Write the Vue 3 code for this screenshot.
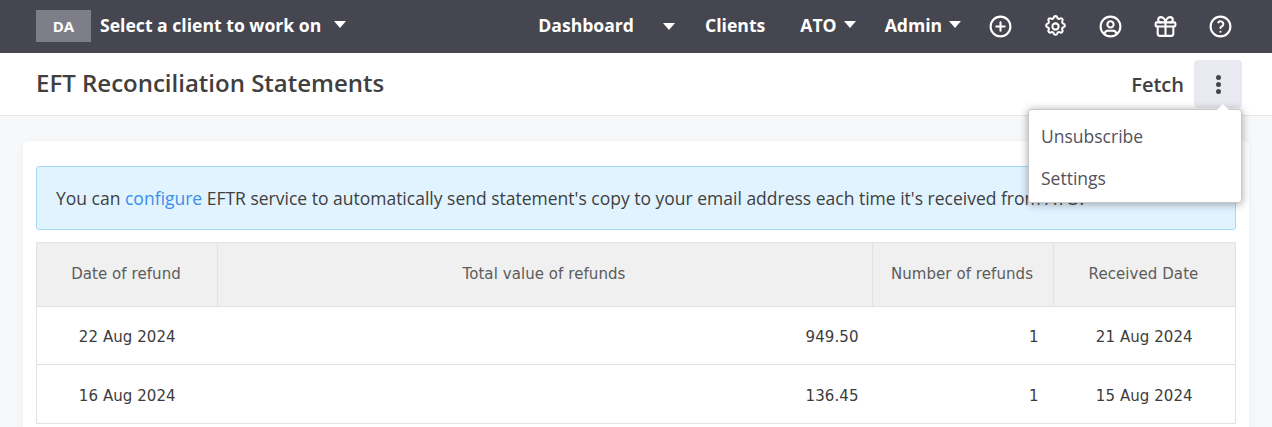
<script setup>
const rows = [
  { date: '22 Aug 2024', total: '949.50', count: 1, received: '21 Aug 2024' },
  { date: '16 Aug 2024', total: '136.45', count: 1, received: '15 Aug 2024' },
]
</script>

<template>
  <div class="page">
    <header class="topbar">
      <div class="client">
        <span class="avatar">DA</span>
        <span class="client-name">Select a client to work on</span>
        <span class="caret caret-client"></span>
      </div>
      <nav class="nav">
        <span class="nav-item nav-dash">Dashboard<span class="caret caret-dash"></span></span>
        <span class="nav-item nav-clients">Clients</span>
        <span class="nav-item nav-ato">ATO<span class="caret caret-tight"></span></span>
        <span class="nav-item nav-admin">Admin<span class="caret caret-tight"></span></span>
      </nav>
      <div class="icons">
        <svg viewBox="0 0 24 24" class="icon"><circle cx="12" cy="12" r="9.5"/><path d="M12 8v8M8 12h8"/></svg>
        <svg viewBox="0 0 24 24" class="icon"><path d="M10.3 3.3c.4-1.7 3-1.7 3.4 0a1.7 1.7 0 0 0 2.6 1.1c1.5-.9 3.2.8 2.3 2.3a1.7 1.7 0 0 0 1.1 2.6c1.7.4 1.7 3 0 3.4a1.7 1.7 0 0 0-1.1 2.6c.9 1.5-.8 3.2-2.3 2.3a1.7 1.7 0 0 0-2.6 1.1c-.4 1.7-3 1.7-3.4 0a1.7 1.7 0 0 0-2.6-1.1c-1.5.9-3.2-.8-2.3-2.3a1.7 1.7 0 0 0-1.1-2.6c-1.7-.4-1.7-3 0-3.4a1.7 1.7 0 0 0 1.1-2.6c-.9-1.5.8-3.2 2.3-2.3a1.7 1.7 0 0 0 2.6-1.1z"/><circle cx="12" cy="12" r="3"/></svg>
        <svg viewBox="0 0 24 24" class="icon"><circle cx="12" cy="12" r="9.5"/><circle cx="12" cy="10" r="3"/><path d="M6.2 18.7A4 4 0 0 1 10 16h4a4 4 0 0 1 3.8 2.7"/></svg>
        <svg viewBox="0 0 24 24" class="icon"><rect x="2.5" y="8" width="19" height="4" rx="1"/><path d="M12 8v13M19.5 12v7a2 2 0 0 1-2 2h-11a2 2 0 0 1-2-2v-7M7.5 8a2.5 2.5 0 0 1 0-5c2.500 0 4.500 3 4.500 5 0-2 2-5 4.500-5a2.500 2.500 0 0 1 0 5"/></svg>
        <svg viewBox="0 0 24 24" class="icon"><circle cx="12" cy="12" r="9.500"/><path d="M12 17v.01M12 13.500a1.500 1.500 0 0 1 1-1.500 2.600 2.600 0 1 0-3-4"/></svg>
      </div>
    </header>

    <div class="subbar">
      <h1 class="title">EFT Reconciliation Statements</h1>
      <div class="actions">
        <span class="fetch">Fetch</span>
        <span class="more"><span class="dot"></span><span class="dot"></span><span class="dot"></span></span>
        <div class="menu">
          <span class="arrow"></span>
          <div class="menu-item">Unsubscribe</div>
          <div class="menu-item">Settings</div>
        </div>
      </div>
    </div>

    <main class="content">
      <section class="card">
        <div class="alert">You can <a class="link">configure</a> EFTR service to automatically send statement's copy to your email address each time it's received from ATO.</div>
        <table class="table">
          <colgroup>
            <col class="c1" /><col /><col class="c3" /><col class="c4" />
          </colgroup>
          <thead>
            <tr>
              <th>Date of refund</th>
              <th>Total value of refunds</th>
              <th>Number of refunds</th>
              <th>Received Date</th>
            </tr>
          </thead>
          <tbody>
            <tr v-for="r in rows" :key="r.date">
              <td class="center">{{ r.date }}</td>
              <td class="right">{{ r.total }}</td>
              <td class="right count">{{ r.count }}</td>
              <td class="center">{{ r.received }}</td>
            </tr>
          </tbody>
        </table>
      </section>
    </main>
  </div>
</template>

<style>
html, body { margin: 0; overflow: hidden; }
</style>

<style scoped>
.page {
  width: 1272px;
  height: 427px;
  overflow: hidden;
  background: #f7f8fa;
  font-family: "Open Sans", sans-serif;
  color: #404040;
}
.topbar {
  height: 53px;
  background: #464650;
  color: #fff;
  display: flex;
  align-items: center;
  padding: 0 0 0 36px;
  box-sizing: border-box;
}
.client { display: flex; align-items: center; }
.avatar {
  width: 55px;
  height: 32px;
  margin-top: -1px;
  background: #7e7e88;
  display: flex;
  align-items: center;
  justify-content: center;
  font-size: 15px;
  font-weight: 700;
}
.client-name { margin-left: 9px; font-size: 17.6px; font-weight: 700; margin-top: -4px; }
.caret {
  display: inline-block;
  width: 0;
  height: 0;
  border-left: 6px solid transparent;
  border-right: 6px solid transparent;
  border-top: 7px solid #fff;
}
.caret-client { margin-left: 13px; margin-top: -5px; }
.nav { display: flex; align-items: center; margin-left: 192px; font-size: 17.6px; font-weight: 700; }
.nav-item { display: inline-flex; align-items: center; margin-top: -4px; }
.caret-dash { margin-left: 29px; margin-top: 4px; }
.caret-tight { margin-left: 7px; margin-top: -1px; }
.nav-dash { margin-right: 30px; }
.nav-clients { margin-right: 35px; }
.nav-ato { margin-right: 29px; }
.icons { display: flex; gap: 30px; margin-left: 27px; }
.icon {
  width: 25px;
  height: 25px;
  fill: none;
  stroke: #fff;
  stroke-width: 2;
  stroke-linecap: round;
  stroke-linejoin: round;
}
.subbar {
  height: 63px;
  box-sizing: border-box;
  background: #fff;
  border-bottom: 1px solid #e4e5e7;
  display: flex;
  align-items: center;
  justify-content: space-between;
  padding: 0 30px 0 36px;
}
.title { margin: 0 0 4px; font-size: 24px; font-weight: 600; color: #404040; }
.actions { display: flex; align-items: center; position: relative; }
.fetch { font-size: 20px; font-weight: 600; margin-right: 10px; }
.more {
  width: 48px;
  height: 48px;
  border-radius: 4px;
  background: #e9e9f1;
  display: flex;
  flex-direction: column;
  align-items: center;
  justify-content: center;
  gap: 2px;
}
.dot { width: 5px; height: 5px; border-radius: 50%; background: #46464f; }
.menu {
  position: absolute;
  top: 49px;
  right: 0;
  width: 214px;
  height: 94px;
  box-sizing: border-box;
  background: #fff;
  border-radius: 3px;
  border: 1px solid #c8c8c8;
  box-shadow: 0 1px 8px rgba(0, 0, 0, 0.35);
  padding-top: 5px;
  z-index: 5;
  font-size: 17.5px;
  color: #52525c;
}
.arrow {
  position: absolute;
  top: -6px;
  right: 12px;
  width: 0;
  height: 0;
  border-left: 6px solid transparent;
  border-right: 6px solid transparent;
  border-bottom: 6px solid #fff;
}
.menu-item { height: 42px; line-height: 42px; padding-left: 12px; }
.content { padding: 25px 23px 0; }
.card {
  background: #fff;
  border-radius: 6px;
  box-shadow: 0 0 8px rgba(0, 0, 0, 0.04);
  padding: 25px 13px 40px;
}
.alert {
  height: 64px;
  box-sizing: border-box;
  background: #e1f3ff;
  border: 1px solid #a6d9f7;
  border-radius: 3px;
  padding: 0 19px;
  display: flex;
  align-items: center;
  white-space: pre-wrap;
  font-size: 17.5px;
  color: #404040;
}
.link { color: #3b8fe8; }
.table {
  margin-top: 12px;
  width: 1200px;
  border-collapse: collapse;
  table-layout: fixed;
  font-family: "DejaVu Sans", sans-serif;
  font-size: 15px;
  letter-spacing: 0.07px;
}
.c1 { width: 181px; }
.c3 { width: 181px; }
.c4 { width: 182px; }
th {
  height: 61px;
  background: #f0f0f0;
  border: 1px solid #e2e2e2;
  font-weight: 400;
  color: #5c5c5c;
  padding: 0 2px 2px 0;
}
td {
  height: 55px;
  border-top: 1px solid #e2e2e2;
  border-bottom: 1px solid #e2e2e2;
  padding: 2px 14px 0;
  color: #3c3c3c;
}
tr:nth-child(2) td { height: 54px; padding-top: 4px; }
td.count { padding-right: 15px; }
td:first-child { border-left: 1px solid #e2e2e2; }
td:last-child { border-right: 1px solid #e2e2e2; }
.center { text-align: center; }
.right { text-align: right; }
</style>
